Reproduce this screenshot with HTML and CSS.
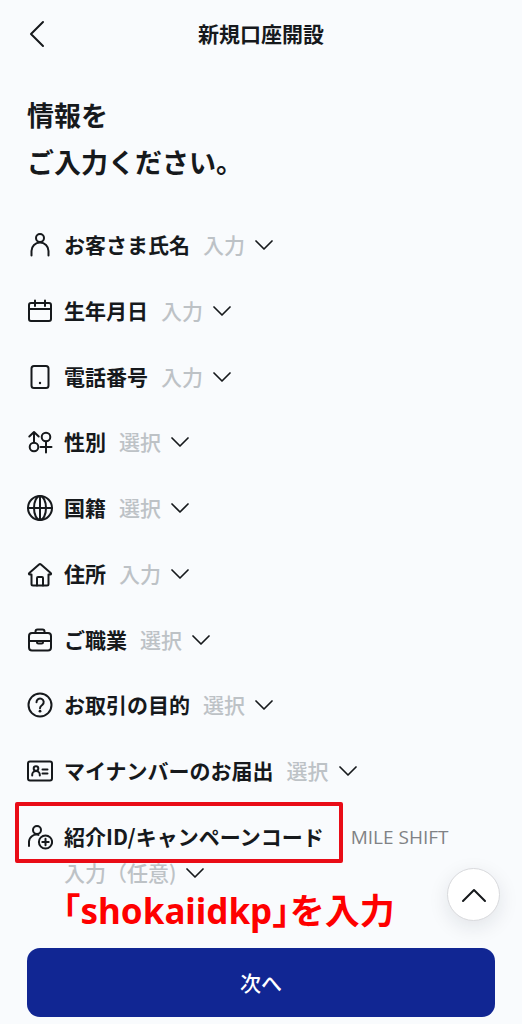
FILE: index.html
```
<!DOCTYPE html>
<html lang="ja">
  <head>
    <meta charset="utf-8" />
    <meta name="viewport" content="width=device-width, initial-scale=1" />
    <title>新規口座開設</title>
    <link rel="stylesheet" href="styles.css">
  </head>
  <body>
    <header class="header">
      <button class="back" type="button" aria-label="戻る">
        <svg width="18" height="28" viewBox="0 0 18 28"><path d="M16 2 4 14l12 12" /></svg>
      </button>
      <div class="header-title">新規口座開設</div>
    </header>

    <main class="content">
      <h1 class="heading">情報を<br />ご入力ください。</h1>

      <div class="items">
        <button class="item" type="button">
          <svg class="icon" viewBox="0 0 26 26"><circle cx="13" cy="6" r="4" /><path d="M4.500 23.500V19a8.500 8.500 0 0 1 17 0v4.500" /></svg>
          <span class="label">お客さま氏名</span>
          <span class="hint">入力</span>
          <svg class="chevron" viewBox="0 0 18 12"><path d="m1 2 8 8 8-8" /></svg>
        </button>
        <button class="item" type="button">
          <svg class="icon" viewBox="0 0 26 26"><rect x="2" y="5" width="22" height="18" rx="2" /><path d="M2 11h22M8 2.5V8M18 2.5V8" /></svg>
          <span class="label">生年月日</span>
          <span class="hint">入力</span>
          <svg class="chevron" viewBox="0 0 18 12"><path d="m1 2 8 8 8-8" /></svg>
        </button>
        <button class="item" type="button">
          <svg class="icon" viewBox="0 0 26 26"><rect x="4.5" y="2" width="17" height="22" rx="2.5" /><circle class="dot" cx="13" cy="19" r="1.2" /></svg>
          <span class="label">電話番号</span>
          <span class="hint">入力</span>
          <svg class="chevron" viewBox="0 0 18 12"><path d="m1 2 8 8 8-8" /></svg>
        </button>
        <button class="item" type="button">
          <svg class="icon" viewBox="0 0 26 26"><circle cx="7" cy="18" r="4.3" /><path d="M7 13.5V3M2.300 7.500 7 3l4.700 4.500" /><circle cx="19" cy="8" r="4.3" /><path d="M19 12.500v11M13.500 18h11" /></svg>
          <span class="label">性別</span>
          <span class="hint">選択</span>
          <svg class="chevron" viewBox="0 0 18 12"><path d="m1 2 8 8 8-8" /></svg>
        </button>
        <button class="item" type="button">
          <svg class="icon" viewBox="0 0 26 26"><circle cx="13" cy="13" r="12" /><ellipse cx="13" cy="13" rx="6" ry="12" /><path d="M13 1v24M1 13h24" /></svg>
          <span class="label">国籍</span>
          <span class="hint">選択</span>
          <svg class="chevron" viewBox="0 0 18 12"><path d="m1 2 8 8 8-8" /></svg>
        </button>
        <button class="item" type="button">
          <svg class="icon" viewBox="0 0 26 26"><path d="M4.5 13.5H2.8c-1 0-1.2-.9-.5-1.5L12 3.6q1-.9 2 0l9.700 8.400c.7.6.5 1.500-.5 1.500h-1.700V23q0 1.500-1.500 1.500H6Q4.500 24.500 4.500 23z" /><path d="M10 24.500V17q0-1 1-1h4q1 0 1 1v7.500" /></svg>
          <span class="label">住所</span>
          <span class="hint">入力</span>
          <svg class="chevron" viewBox="0 0 18 12"><path d="m1 2 8 8 8-8" /></svg>
        </button>
        <button class="item" type="button">
          <svg class="icon" viewBox="0 0 26 26"><rect x="2" y="6" width="22" height="17.500" rx="3" /><path d="M8.500 6V4.500q0-2 2-2h5q2 0 2 2V6M2 14h22M10 14v1q0 1.500 1.500 1.500h3q1.500 0 1.500-1.500v-1" /></svg>
          <span class="label">ご職業</span>
          <span class="hint">選択</span>
          <svg class="chevron" viewBox="0 0 18 12"><path d="m1 2 8 8 8-8" /></svg>
        </button>
        <button class="item" type="button">
          <svg class="icon" viewBox="0 0 26 26"><circle cx="13" cy="13" r="11.500" /><path d="M9.500 10.200a3.600 3.600 0 1 1 5.800 2.700c-1.500 1.100-2.300 1.600-2.300 3.300" /><circle class="dot" cx="13" cy="19.200" r="1.400" /></svg>
          <span class="label">お取引の目的</span>
          <span class="hint">選択</span>
          <svg class="chevron" viewBox="0 0 18 12"><path d="m1 2 8 8 8-8" /></svg>
        </button>
        <button class="item" type="button">
          <svg class="icon" viewBox="0 0 26 26"><rect x="1" y="3.500" width="24" height="19" rx="2" /><circle cx="9" cy="10.500" r="2.300" /><path d="M5.200 17.500v-.7a3.800 3.800 0 0 1 7.600 0v.7M15.500 11.500h5M15.500 15.500h5" /></svg>
          <span class="label">マイナンバーのお届出</span>
          <span class="hint">選択</span>
          <svg class="chevron" viewBox="0 0 18 12"><path d="m1 2 8 8 8-8" /></svg>
        </button>
        <button class="item item-code" type="button">
          <svg class="icon" viewBox="0 0 26 26"><circle cx="10" cy="6" r="4" /><path d="M2 22v-4.500a7.500 7.500 0 0 1 9.500-6.600" /><circle cx="18.500" cy="18" r="6.600" /><path d="M18.500 14.800v6.400M15.300 18h6.400" /></svg>
          <span class="label">紹介ID/キャンペーンコード</span>
          <span class="partner">MILE SHIFT</span>
          <span class="code-hint">
            <span class="hint">入力（任意)</span>
            <svg class="chevron" viewBox="0 0 18 12"><path d="m1 2 8 8 8-8" /></svg>
          </span>
        </button>
      </div>

      <p class="note">「shokaiidkp」を入力</p>
    </main>

    <footer class="footer">
      <button class="to-top" type="button" aria-label="上へ戻る">
        <svg width="26" height="16" viewBox="0 0 26 16"><path d="M2 14 13 3l11 11" /></svg>
      </button>
      <button class="next" type="button">次へ</button>
    </footer>
  </body>
</html>
```
FILE: styles.css
```
*,
*::after {
  box-sizing: border-box;
}

body {
  display: flex;
  flex-direction: column;
  min-height: 100vh;
  margin: 0;
  background: #f9fbfd;
  color: #16191c;
  font-family: "Noto Sans CJK JP", sans-serif;
  font-size: 21px;
  line-height: 28px;
}

button {
  padding: 0;
  border: 0;
  background: none;
  color: inherit;
  font: inherit;
  cursor: pointer;
}

svg {
  display: block;
  flex: none;
  fill: none;
  stroke: #16191c;
  stroke-width: 2;
  stroke-linecap: round;
  stroke-linejoin: round;
}

.header {
  display: grid;
  grid-template-columns: 40px 1fr 40px;
  align-items: center;
  height: 68px;
  padding: 0 27px;
}

.header-title {
  padding-bottom: 2px;
  text-align: center;
  font-weight: 700;
}

.content {
  display: flex;
  flex: 1;
  flex-direction: column;
  padding: 0 27px;
}

.heading {
  margin: 23px 0 45px;
  font-size: 27px;
  font-weight: 700;
  line-height: 47px;
}

.items {
  display: flex;
  flex: 1;
  flex-direction: column;
  align-items: flex-start;
  justify-content: space-between;
}

.item {
  display: flex;
  align-items: center;
  text-align: left;
}

.icon {
  width: 26px;
  height: 26px;
  margin-right: 11px;
}

.dot {
  fill: #16191c;
  stroke: none;
}

.label,
.hint {
  padding-bottom: 2px;
}

.label {
  font-weight: 700;
}

.hint {
  margin-left: 13px;
  color: #bdc2c6;
  font-weight: 500;
}

.chevron {
  width: 18px;
  height: 12px;
  margin-left: 10px;
  stroke-width: 1.7;
}

.item-code {
  position: relative;
  flex-wrap: wrap;
}

/* red frame around the campaign code label */
.item-code .label::after {
  content: "";
  position: absolute;
  top: -20px;
  left: -12px;
  width: 328px;
  height: 61px;
  border: 4px solid #e90c17;
  border-radius: 2px;
}

.partner {
  margin-left: 27px;
  color: #808285;
  font-family: "Open Sans", sans-serif;
  font-size: 19px;
}

.code-hint {
  display: flex;
  align-items: center;
  width: 100%;
  padding: 6px 0 0 37px;
}

.code-hint .hint {
  margin-left: 0;
}

.note {
  margin: 3px 0 0 36px;
  color: #fe0000;
  font-family: "Noto Sans", "Noto Sans CJK JP", sans-serif;
  font-size: 35px;
  font-weight: 700;
  line-height: 40px;
  font-feature-settings: "halt";
}

.footer {
  position: relative;
  padding: 17px 27px 7px;
}

.next {
  width: 100%;
  height: 69px;
  padding-bottom: 2px;
  border-radius: 13px;
  background: #112693;
  color: #fff;
  font-weight: 500;
}

.to-top {
  position: absolute;
  top: -63px;
  right: 22px;
  display: flex;
  align-items: center;
  justify-content: center;
  width: 53px;
  height: 53px;
  border: 1px solid #d9dadd;
  border-radius: 50%;
  background: #fff;
  box-shadow: 0 6px 20px rgba(20, 25, 50, 0.1);
}
```
